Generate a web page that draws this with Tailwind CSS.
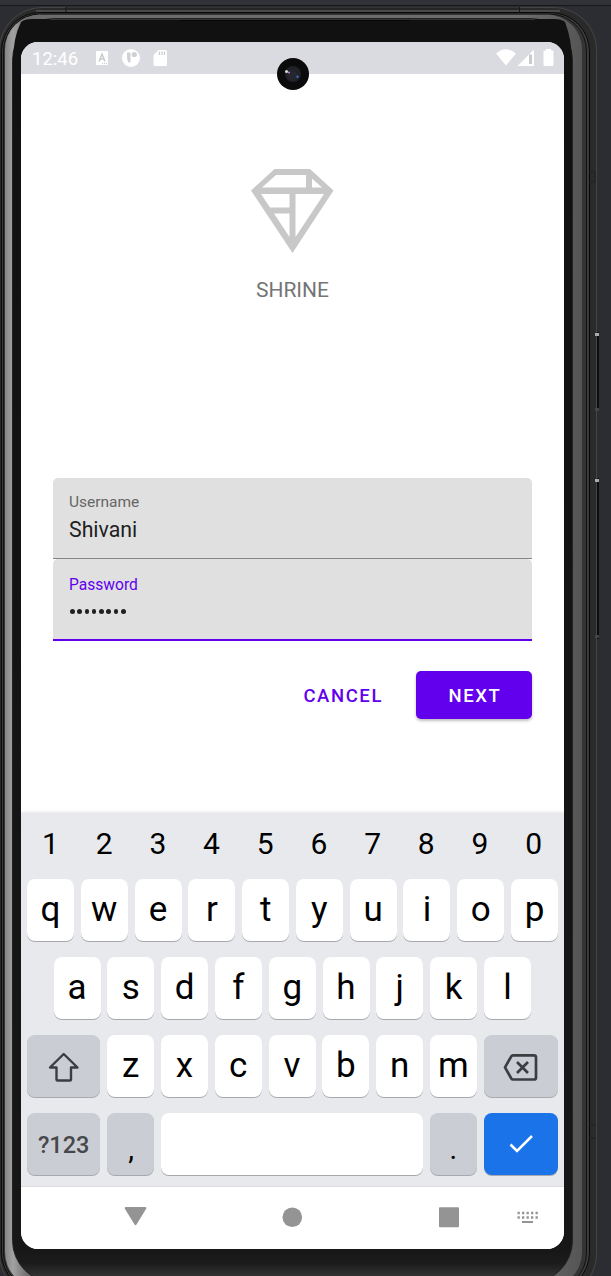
<!DOCTYPE html>
<html lang="en">
<head>
<meta charset="utf-8">
<title>Shrine</title>
<script src="https://cdn.jsdelivr.net/npm/@tailwindcss/browser@4"></script>
</head>
<body class="relative w-[611px] h-[1276px] overflow-hidden bg-[#2b2d32] font-['Roboto',sans-serif]">
<!-- device body -->
<svg class="absolute inset-0" width="611" height="1276" viewBox="0 0 611 1276">
  <defs>
    <linearGradient id="rim" x1="0" x2="1"><stop offset="0" stop-color="#858585"/><stop offset=".014" stop-color="#a2a2a2"/><stop offset=".04" stop-color="#6e6b6d"/><stop offset=".9" stop-color="#6e6b6d"/><stop offset="1" stop-color="#555"/></linearGradient>
    <linearGradient id="glass" x1="0" x2="0" y1="0" y2="1"><stop offset="0" stop-color="#111"/><stop offset=".975" stop-color="#171717"/><stop offset=".985" stop-color="#1c1c1c"/><stop offset="1" stop-color="#403e3f"/></linearGradient>
  </defs>
  <rect width="611" height="5" fill="#303238"/>
  <rect y="5" width="611" height="1" fill="#17181b"/>
  <rect x="594" y="332" width="5" height="79" fill="#0d0d0d"/>
  <rect x="594" y="478" width="5" height="161" fill="#0d0d0d"/>
  <rect x="-1" y="7" width="598" height="1290" rx="43" fill="#444"/>
  <rect x="0" y="8" width="596" height="1288" rx="42" fill="#2a2a2a"/>
  <path d="M66 8.5H520" stroke="#252527" stroke-width="2"/>
  <path d="M36 11H560" stroke="#4a494a" stroke-width="2"/>
  <rect x="1.5" y="12.500" width="588" height="1279" rx="39" fill="#3c3c3c" stroke="#080808"/>
  <rect x="3.500" y="14" width="583" height="1276" rx="37" fill="#343434" stroke="#111"/>
  <rect x="5" y="14.500" width="577" height="1273" rx="35" fill="url(#rim)"/>
  <path d="M40 14.500H548" stroke="#353536"/>
  <rect x="12.500" y="18.500" width="560" height="1264" rx="42" fill="url(#glass)" stroke="#222"/>
  <path d="M21 22Q24 19 32 19H554Q562 19 565 22Q572 40 572 62V90H13V62Q13 38 21 22" fill="#111"/>
  <path d="M50 19.500H535" stroke="#353535"/>
  <path d="M180 20.500H410" stroke="#060606"/>
  <path d="M66 7V12M519.500 7V13" stroke="#161616"/>
  <path d="M589 172H595V182H589M589 1125H596M589 1138H596" fill="none" stroke="#202020"/>
  <path d="M595 333H599V336H595ZM595 479H599V482H595Z" fill="#aaa"/>
  <path d="M595 408H599V411H595ZM595 635H599V638H595Z" fill="#444"/>
</svg>

<main class="relative ml-[21px] mt-[42px] flex h-[1207px] w-[543px] flex-col overflow-hidden rounded-[17px] bg-white">
  <header class="flex h-8 shrink-0 items-center bg-[#dadbe0] pl-[11px] pr-[9px] text-white">
    <span class="w-[64px] text-[18.500px] leading-8 pt-[2px]">12:46</span>
    <svg width="80" height="32" viewBox="96 42 80 32">
      <rect x="96" y="51" width="12" height="14" rx="1" fill="#fff"/>
      <path d="M99 61.500L102 54L105 61.500M100 59H104" fill="none" stroke="#c9cace" stroke-width="1.500"/>
      <path d="M102 63.500H107" stroke="#c9cace" stroke-dasharray="1 1"/>
      <circle cx="131" cy="58" r="9" fill="#fff"/>
      <path d="M127 52.500H130.500V62.500H128.500Q127 60 127 57Z" fill="#cfd0d5"/><circle cx="134.300" cy="54.500" r="2.600" fill="#cfd0d5"/>
      <path d="M158.500 50H165.500Q167 50 167 51.500V64.500Q167 66 165.500 66H155Q153.500 66 153.500 64.500V55Z" fill="#fff"/>
      <path d="M159.500 51.500V55M162 51.500V55M164.500 51.500V55" stroke="#c9cace" stroke-width="1.200"/>
    </svg>
    <svg class="ml-auto" width="60" height="32" viewBox="495 42 60 32">
      <path d="M496 53.500Q506 45 516 53.500L506 65.500Z" fill="#fff"/>
      <path d="M517.500 66L534 49.500V66Z" fill="#fff"/><path d="M529 54.500H532V64H529Z" fill="#c9cace"/>
      <path d="M546 50.500V49H551V50.500H552.500Q553.500 50.500 553.500 51.500V65Q553.500 66 552.500 66H544.500Q543.500 66 543.500 65V51.500Q543.500 50.500 544.500 50.500Z" fill="#fff"/>
    </svg>
  </header>

  <section class="flex h-[739px] shrink-0 flex-col px-8">
    <div class="flex flex-col items-center pt-[94px] pr-px">
      <svg width="84" height="86" viewBox="250 168 84 86">
        <path d="M251 190.500L274.500 169H310L333.500 190.500L292.500 253ZM276 175L262 187.500H306V175ZM312 178.500V187.500H322ZM261 194L270 207.500H289.500V194ZM295.500 194V237L324 194ZM274 213.500L289.500 237V213.500Z" fill="#c8c8c8" fill-rule="evenodd"/>
      </svg>
      <h1 class="mt-[22px] pl-px text-[21px] leading-7 text-[#757575]">SHRINE</h1>
    </div>
    <form class="mt-[173.500px]">
      <label class="block h-[81.500px] rounded-t-[5px] border-b-[1.500px] border-[#858585] bg-[#e0e0e0] pl-4 pt-[14.500px]">
        <span class="block text-[15.500px] leading-5 text-[#666]">Username</span>
        <span class="block pt-[4px] text-[21.300px] leading-7 text-[#202020]">Shivani</span>
      </label>
      <div class="h-[82px] rounded-t-[5px] border-b-[2.500px] border-[#6200ee] bg-[#e0e0e0] pl-4 pt-[15.500px]">
        <span class="block text-[15.600px] leading-5 text-[#6200ee]">Password</span>
        <span class="flex gap-[2.800px] pt-[14.500px] pl-px"><i class="size-[4.500px] rounded-full bg-[#202020]"></i><i class="size-[4.500px] rounded-full bg-[#202020]"></i><i class="size-[4.500px] rounded-full bg-[#202020]"></i><i class="size-[4.500px] rounded-full bg-[#202020]"></i><i class="size-[4.500px] rounded-full bg-[#202020]"></i><i class="size-[4.500px] rounded-full bg-[#202020]"></i><i class="size-[4.500px] rounded-full bg-[#202020]"></i><i class="size-[4.500px] rounded-full bg-[#202020]"></i></span>
      </div>
      <div class="mt-[30px] flex justify-end gap-[33px] text-[18.500px] font-medium tracking-[1.600px]">
        <button type="button" class="h-12 pt-[3px] text-[#6200ee]">CANCEL</button>
        <button type="button" class="h-12 w-[116px] rounded-[5px] bg-[#6200ee] pl-[2px] pt-[3px] text-white shadow-[0_2px_3px_rgba(0,0,0,0.25)]">NEXT</button>
      </div>
    </form>
  </section>

  <section class="flex h-[374px] shrink-0 flex-col gap-4 border-b border-[#dcdcde] bg-[#e8e9ed] px-[6px] text-[35px] text-black shadow-[0_-1px_3px_rgba(0,0,0,0.1)]">
    <div class="mb-[-16px] flex h-[66px] shrink-0 gap-[6.800px] pb-[5px] pr-px text-[30px] *:flex *:flex-1 *:items-center *:justify-center">
      <span>1</span><span>2</span><span>3</span><span>4</span><span>5</span><span>6</span><span>7</span><span>8</span><span>9</span><span>0</span>
    </div>
    <div class="flex h-[62px] shrink-0 gap-[6.800px] *:flex *:w-[47px] *:items-center *:justify-center *:rounded-[8px] *:bg-white *:pt-px *:shadow-[0_1px_0_#a8a9ac]">
      <span>q</span><span>w</span><span>e</span><span>r</span><span>t</span><span>y</span><span>u</span><span>i</span><span>o</span><span>p</span>
    </div>
    <div class="flex h-[62px] shrink-0 justify-center gap-[6.800px] pr-[0.600px] *:flex *:w-[47px] *:items-center *:justify-center *:rounded-[8px] *:bg-white *:pt-px *:shadow-[0_1px_0_#a8a9ac]">
      <span>a</span><span>s</span><span>d</span><span>f</span><span>g</span><span>h</span><span>j</span><span>k</span><span>l</span>
    </div>
    <div class="flex h-[62px] shrink-0 gap-[6.800px] *:flex *:items-center *:justify-center *:rounded-[8px] *:pt-px *:shadow-[0_1px_0_#a8a9ac]">
      <span class="w-[73.400px] bg-[#cbcdd5]"><svg width="34" height="34" viewBox="47 1049 34 34" fill="none" stroke="#3c3d40" stroke-width="2.400" stroke-linejoin="round"><path d="M63.700 1053L50 1066.500H56.500V1078.500Q56.500 1079.500 57.500 1079.500H70Q71 1079.500 71 1078.500V1066.500H77.500Z"/></svg></span>
      <span class="w-[47px] bg-white">z</span><span class="w-[47px] bg-white">x</span><span class="w-[47px] bg-white">c</span><span class="w-[47px] bg-white">v</span><span class="w-[47px] bg-white">b</span><span class="w-[47px] bg-white">n</span><span class="w-[47px] bg-white">m</span>
      <span class="flex-1 bg-[#cbcdd5]"><svg width="38" height="34" viewBox="502 1050 38 34" fill="none" stroke="#3c3d40" stroke-width="2.700" stroke-linejoin="round"><path d="M513 1055.300H534Q536 1055.300 536 1057.300V1077.500Q536 1079.500 534 1079.500H513Q512 1079.500 511.300 1078.500L505 1067.400L511.300 1056.300Q512 1055.300 513 1055.300ZM517 1062L528 1073M528 1062L517 1073"/></svg></span>
    </div>
    <div class="flex h-[62px] shrink-0 gap-[6.800px] *:flex *:items-center *:justify-center *:rounded-[8px] *:shadow-[0_1px_0_#a8a9ac]">
      <span class="w-[73.400px] bg-[#cbcdd5] pt-[3px] text-[23.500px] font-medium text-[#46474a]">?123</span>
      <span class="w-[47px] bg-[#cbcdd5] pl-px pt-[12px] text-[29px]">,</span>
      <span class="w-[262px] bg-white"></span>
      <span class="w-[47px] bg-[#cbcdd5] pt-[12px] text-[29px]">.</span>
      <span class="flex-1 bg-[#1a73e8]"><svg width="26" height="20" viewBox="508 1134 26 20" fill="none" stroke="#fff" stroke-width="2.500"><path d="M510.500 1144.500L517 1151L532 1136"/></svg></span>
    </div>
  </section>

  <nav class="flex h-[62px] shrink-0 items-center bg-white">
    <svg width="543" height="62" viewBox="21 1187 543 62" fill="#949494">
      <path d="M126 1207H145Q147 1207 146 1209L136.500 1224.500Q135.500 1226 134.500 1224.500L125 1209Q124 1207 126 1207Z"/>
      <circle cx="292.300" cy="1217.200" r="9.800"/>
      <rect x="439" y="1207.200" width="20" height="20" rx="1"/>
      <path d="M517.500 1213H538M517.500 1217.500H538" stroke="#949494" stroke-width="2.300" stroke-dasharray="2.300 2.200"/>
      <path d="M522 1222H533" stroke="#949494" stroke-width="2"/>
    </svg>
  </nav>
</main>

<!-- front camera, over the screen -->
<svg class="absolute left-[276px] top-[57px]" width="34" height="34" viewBox="276 57 34 34">
  <circle cx="293" cy="74" r="16" fill="#0b0b0c"/><circle cx="293" cy="74" r="8" fill="#20222a"/><circle cx="292" cy="75" r="5" fill="#25262f"/>
  <circle cx="286.500" cy="71.500" r="1.500" fill="#d7e4d8"/><circle cx="289" cy="72.500" r="1" fill="#b58cc0"/><circle cx="297.500" cy="76.800" r="1.200" fill="#2e72c0"/>
</svg>
</body>
</html>
